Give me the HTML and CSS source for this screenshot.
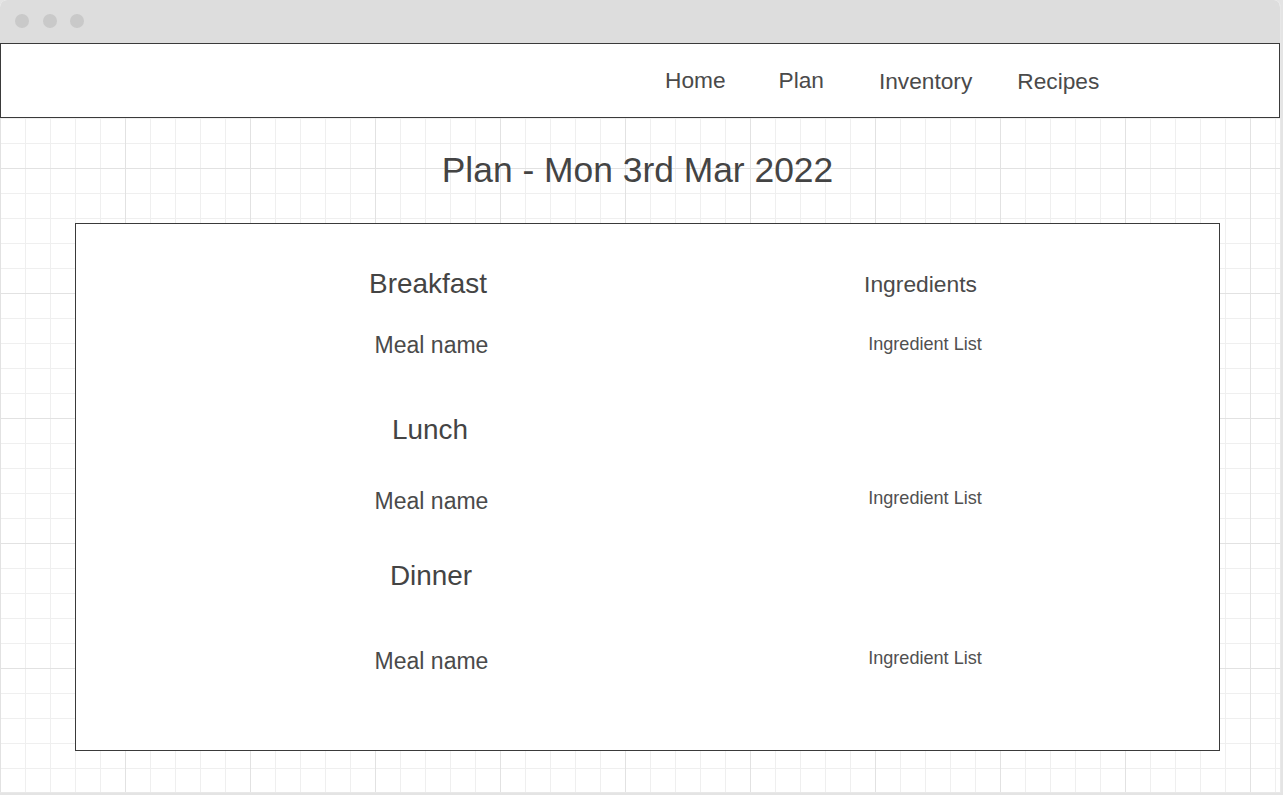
FILE: index.html
```html
<!DOCTYPE html>
<html>
<head>
<meta charset="utf-8">
<title>Plan</title>
<link rel="stylesheet" href="styles.css">
</head>
<body>
<div class="window">
  <div class="titlebar">
    <span class="dot"></span><span class="dot"></span><span class="dot"></span>
  </div>
  <div class="content">
    <nav class="navbar">
      <a class="nav-item">Home</a>
      <a class="nav-item nav-plan">Plan</a>
      <a class="nav-item nav-inventory low">Inventory</a>
      <a class="nav-item nav-recipes low">Recipes</a>
    </nav>
    <h1 class="page-title">Plan - Mon 3rd Mar 2022</h1>
    <section class="card">
      <div class="row r1">
        <div class="cell-left meal-title t-breakfast">Breakfast</div>
        <div class="cell-right ing-title">Ingredients</div>
      </div>
      <div class="row r2">
        <div class="cell-left meal-name">Meal name</div>
        <div class="cell-right ing-list">Ingredient List</div>
      </div>
      <div class="row r3">
        <div class="cell-left meal-title">Lunch</div>
        <div class="cell-right"></div>
      </div>
      <div class="row r4">
        <div class="cell-left meal-name">Meal name</div>
        <div class="cell-right ing-list up">Ingredient List</div>
      </div>
      <div class="row r5">
        <div class="cell-left meal-title t-dinner">Dinner</div>
        <div class="cell-right"></div>
      </div>
      <div class="row r6">
        <div class="cell-left meal-name">Meal name</div>
        <div class="cell-right ing-list up">Ingredient List</div>
      </div>
    </section>
  </div>
</div>
</body>
</html>
```

FILE: styles.css
```css
html, body {
  margin: 0;
  padding: 0;
}
body {
  background: #e4e4e4;
  width: 1283px;
  height: 795px;
  overflow: hidden;
  font-family: "Liberation Sans", Arial, sans-serif;
  color: #444444;
}
.window {
  width: 1280px;
  height: 792px;
  background: #ffffff;
  border-radius: 7px 7px 0 0;
  border-right: 1px solid #e8e8e8;
  border-bottom: 1px solid #e8e8e8;
  overflow: hidden;
  display: flex;
  flex-direction: column;
}
.titlebar {
  height: 43px;
  flex: none;
  background: #dddddd;
  display: flex;
  align-items: center;
  padding-left: 15px;
  gap: 13.5px;
  box-sizing: border-box;
  padding-bottom: 1px;
}
.dot {
  width: 14px;
  height: 14px;
  border-radius: 50%;
  background: #c9c9c9;
}
.content {
  flex: 1;
  background-color: #ffffff;
  background-image:
    linear-gradient(to right, #e2e2e2 1px, transparent 1px),
    linear-gradient(to bottom, #e2e2e2 1px, transparent 1px),
    linear-gradient(to right, #efefef 1px, transparent 1px),
    linear-gradient(to bottom, #efefef 1px, transparent 1px);
  background-size: 125px 125px, 125px 125px, 25px 25px, 25px 25px;
  background-position: 0 0;
}
.navbar {
  height: 75px;
  box-sizing: border-box;
  border: 1px solid #3a3a3a;
  background: #ffffff;
  display: flex;
  align-items: center;
  padding-left: 664px;
}
.nav-item {
  font-size: 22.7px;
  color: #4a4a4a;
  line-height: 30px;
  padding-bottom: 1px;
}
.nav-plan { margin-left: 53px; }
.nav-inventory { margin-left: 55px; }
.nav-recipes { margin-left: 45px; }
.low { padding-top: 1px; padding-bottom: 0; }
.page-title {
  margin: 32px 0 0 0;
  font-weight: normal;
  font-size: 35.4px;
  line-height: 40px;
  text-align: center;
  width: 1275px;
  color: #444444;
}
.card {
  margin: 33px 0 0 75px;
  width: 1145px;
  height: 528px;
  box-sizing: border-box;
  border: 1px solid #3a3a3a;
  background: #ffffff;
  padding-top: 40px;
}
.row {
  display: grid;
  grid-template-columns: 708px 280px;
  height: 40px;
  align-items: center;
}
.r2 { margin-top: 21px; }
.r3 { margin-top: 45px; }
.r4 { margin-top: 31px; }
.r5 { margin-top: 35px; }
.r6 { margin-top: 45px; }
.cell-left, .cell-right {
  text-align: center;
  white-space: nowrap;
}
.meal-title {
  font-size: 27.9px;
  color: #444444;
}
.t-breakfast { padding-right: 4px; }
.t-dinner { padding-left: 2px; }
.meal-name {
  font-size: 23px;
  color: #4a4a4a;
  padding-left: 3px;
}
.ing-title {
  font-size: 22.8px;
  color: #4a4a4a;
  padding-right: 7px;
}
.ing-list {
  font-size: 18.1px;
  color: #505050;
  padding-bottom: 2px;
  padding-left: 2px;
}
.ing-list.up {
  padding-bottom: 6px;
}
```
